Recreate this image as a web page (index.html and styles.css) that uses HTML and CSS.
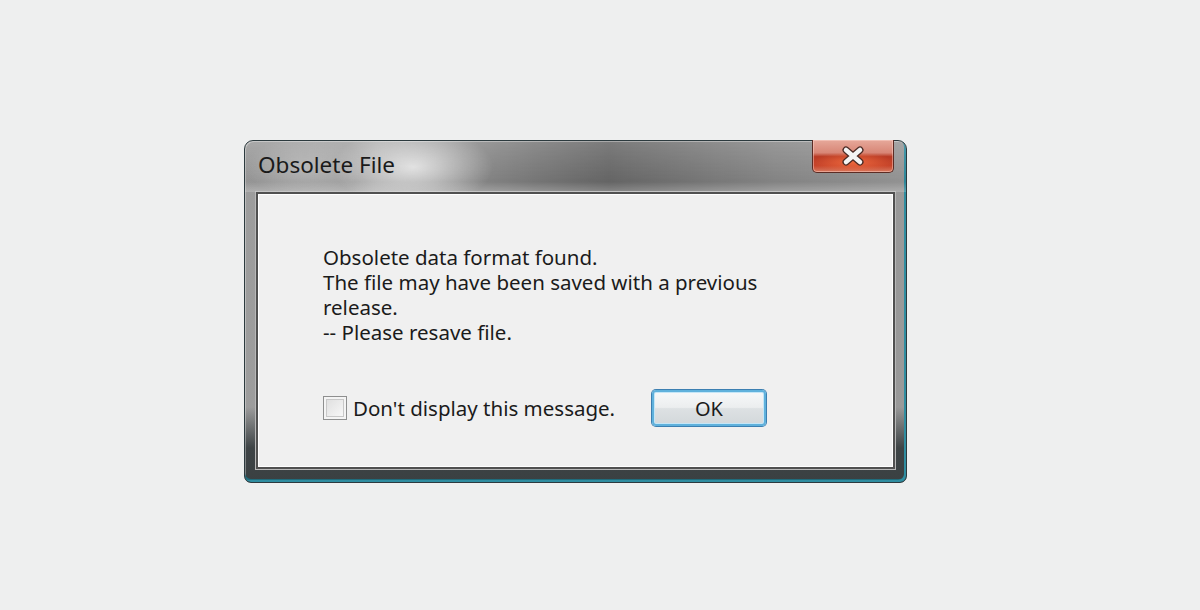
FILE: index.html
```html
<!DOCTYPE html>
<html>
<head>
<meta charset="utf-8">
<link rel="stylesheet" href="styles.css">
</head>
<body>
<div class="stage">
  <div class="dialog">
    <div class="titlebar">
      <span class="title">Obsolete File</span>
      <div class="close">
        <svg width="26" height="20" viewBox="0 0 26 20">
          <path d="M6 4 L20 16 M20 4 L6 16" stroke="#4a2a24" stroke-width="7" stroke-linecap="round"/>
          <path d="M6 4 L20 16 M20 4 L6 16" stroke="#f4f4f4" stroke-width="4.5" stroke-linecap="round"/>
        </svg>
      </div>
    </div>
    <div class="panel">
      <div class="message">
        <div class="line">Obsolete data format found.</div>
        <div class="line">The file may have been saved with a previous</div>
        <div class="line">release.</div>
        <div class="line">-- Please resave file.</div>
      </div>
      <div class="actions">
        <label class="check">
          <span class="box"></span>
          <span class="label">Don't display this message.</span>
        </label>
        <div class="ok">OK</div>
      </div>
    </div>
  </div>
</div>
</body>
</html>
```

FILE: styles.css
```css
html, body {
  margin: 0;
  padding: 0;
  background: #eeefef;
}
.stage {
  width: 1200px;
  height: 610px;
  padding: 140px 0 0 244px;
  box-sizing: border-box;
}
.dialog {
  width: 663px;
  height: 343px;
  box-sizing: border-box;
  border: 1px solid #2c3a3e;
  border-radius: 9px 9px 7px 7px;
  padding: 0 11px 13px 11px;
  display: flex;
  flex-direction: column;
  background:
    linear-gradient(to bottom, rgba(0,0,0,0) 0, rgba(0,0,0,0) 78%, #3e4446 90%, #3a4042 100%),
    linear-gradient(to right, #9c9c9c 0, #a8a8a8 20%, #7a7a7a 45%, #6a6a6a 55%, #8a8a8a 80%, #9a9a9a 100%);
  box-shadow: inset -2px -2px 0 #2f8da0, inset 0 -3px 0 #1f6c7c, inset 1px 1px 0 rgba(255,255,255,0.35);
  font-family: "Noto Sans", "Open Sans", sans-serif;
  color: #1b1b1b;
}
.titlebar {
  height: 51px;
  flex: none;
  display: flex;
  align-items: flex-start;
  position: relative;
  background:
    radial-gradient(ellipse 80px 40px at 168px 26px, rgba(255,255,255,0.7), rgba(255,255,255,0) 100%),
    radial-gradient(ellipse 60px 30px at 60px 26px, rgba(255,255,255,0.25), rgba(255,255,255,0) 100%),
    linear-gradient(to bottom, rgba(255,255,255,0.12), rgba(0,0,0,0.05) 80%, rgba(255,255,255,0.2) 100%);
  margin: 0 -11px 0 -11px;
  padding: 0 11px 0 11px;
  border-radius: 8px 8px 0 0;
}
.title {
  font-size: 22.5px;
  line-height: 26px;
  margin-top: 11px;
  margin-left: 2px;
  color: #1a1a1a;
}
.close {
  position: absolute;
  top: -1px;
  right: 12px;
  width: 80px;
  height: 32px;
  border: 1px solid #5c2c24;
  border-top: none;
  border-radius: 0 0 5px 5px;
  background:
    radial-gradient(ellipse 40px 10px at 40px 22px, rgba(255,120,70,0.7), rgba(255,120,70,0) 100%),
    linear-gradient(to bottom, #e6a89a 0, #d88676 40%, #b83a24 52%, #c6442a 80%, #d87a60 100%);
  box-shadow: inset 0 0 0 1px rgba(255,220,210,0.45);
  display: flex;
  align-items: center;
  justify-content: center;
}
.panel {
  flex: 1;
  background: #f0f0f0;
  border: 2px solid #505050;
  box-shadow: 0 0 0 1px #b8b8b8, inset 0 0 0 1px #ffffff;
  padding: 51px 0 0 65px;
  display: flex;
  flex-direction: column;
}
.message {
  font-size: 20.5px;
  line-height: 25px;
}
.line {
  height: 25px;
}
.actions {
  margin-top: 45px;
  display: flex;
  align-items: center;
  height: 36px;
}
.check {
  width: 329px;
  display: flex;
  align-items: center;
  gap: 6px;
  font-size: 20.5px;
}
.box {
  width: 22px;
  height: 22px;
  border: 1px solid #8e8f8f;
  background: linear-gradient(135deg, #dcdcdc, #fbfbfb);
  box-shadow: inset 0 0 0 2px #f4f4f4, inset 0 0 0 3px #c8c8c8;
}
.ok {
  width: 114px;
  height: 36px;
  box-sizing: border-box;
  border: 2px solid #5fb1dc;
  border-radius: 4px;
  background: linear-gradient(to bottom, #f6f8f9 0, #eceeef 48%, #dde1e3 52%, #d3d8db 100%);
  box-shadow: inset 0 0 0 1px #c4e6f7, 0 0 0 1px #3c7fb1;
  display: flex;
  align-items: center;
  justify-content: center;
  font-size: 20px;
}
```
